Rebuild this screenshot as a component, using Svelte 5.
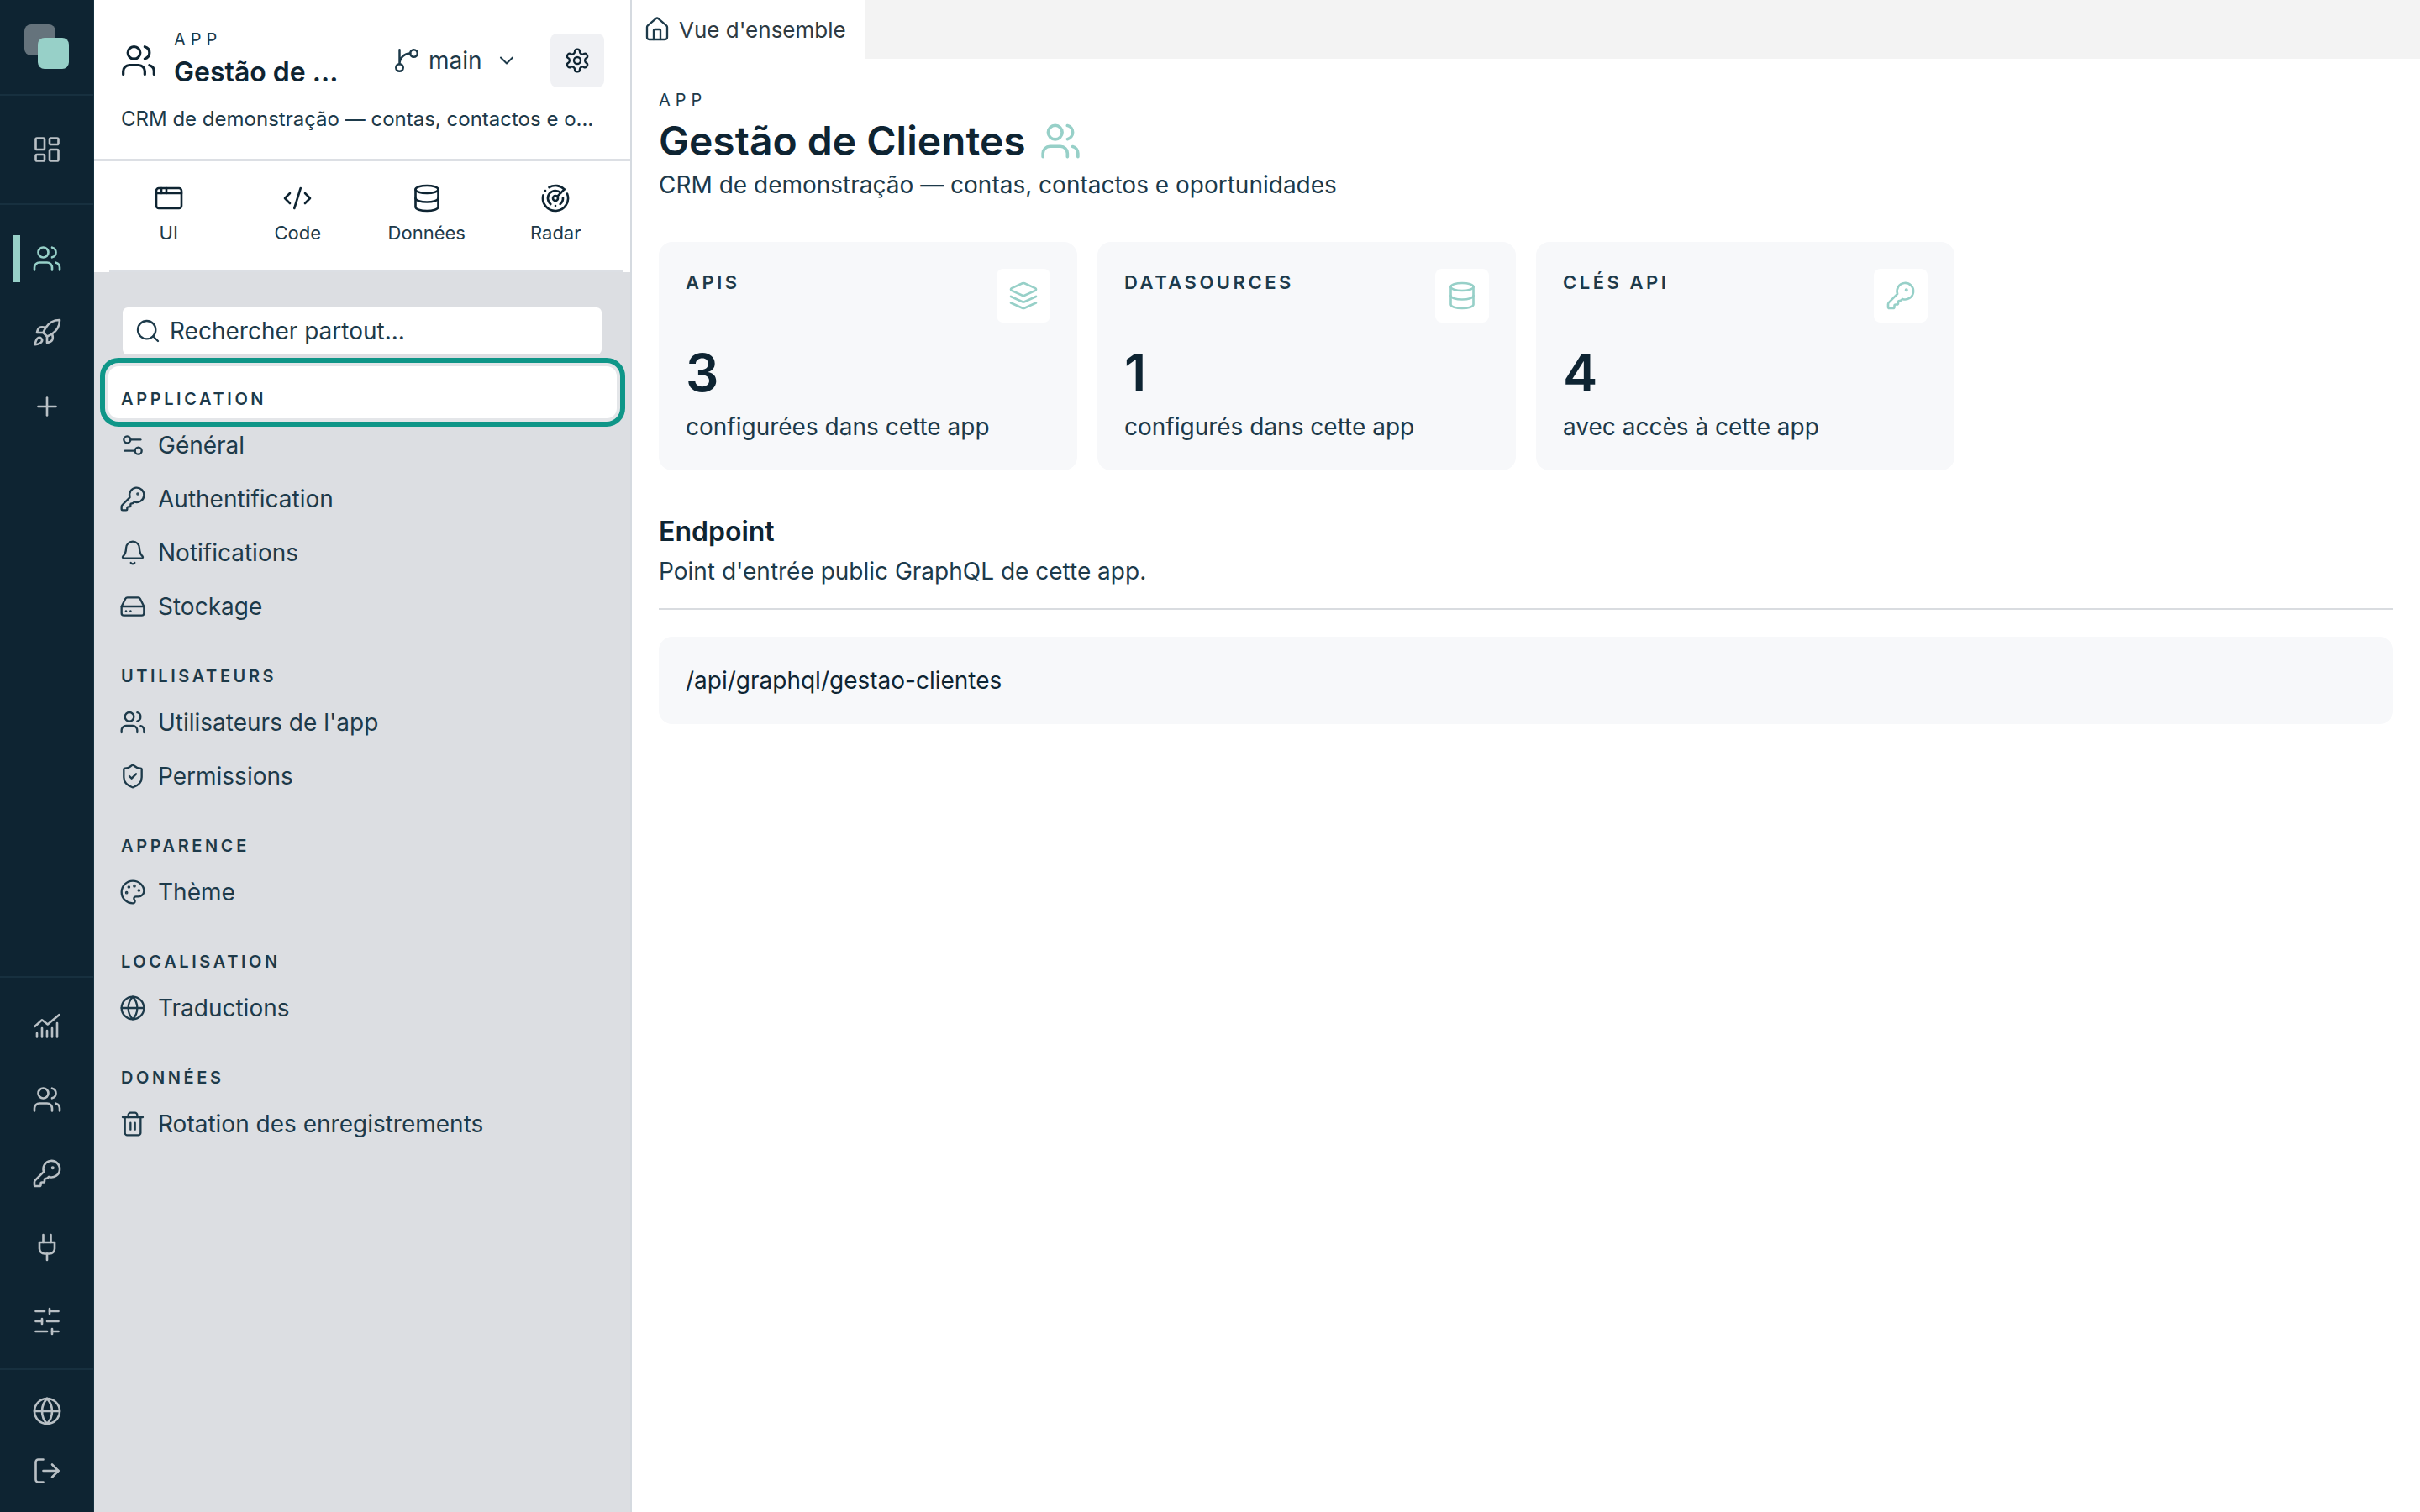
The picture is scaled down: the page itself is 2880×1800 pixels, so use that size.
<script lang="ts">
	// lucide-style icon bodies, all on a 24 unit grid
	const icons: Record<string, string> = {
		users: '<path d="M16 21v-2a4 4 0 0 0-4-4H6a4 4 0 0 0-4 4v2"/><circle cx="9" cy="7" r="4"/><path d="M22 21v-2a4 4 0 0 0-3-3.87"/><path d="M16 3.13a4 4 0 0 1 0 7.75"/>',
		dashboard: '<rect x="3" y="3" width="7" height="9" rx="1"/><rect x="14" y="3" width="7" height="5" rx="1"/><rect x="14" y="12" width="7" height="9" rx="1"/><rect x="3" y="16" width="7" height="5" rx="1"/>',
		rocket: '<path d="M4.5 16.5c-1.5 1.26-2 5-2 5s3.74-.5 5-2c.71-.84.7-2.13-.09-2.91a2.18 2.18 0 0 0-2.91-.09z"/><path d="m12 15-3-3a22 22 0 0 1 2-3.95A12.88 12.88 0 0 1 22 2c0 2.72-.78 7.5-6 11a22.35 22.35 0 0 1-4 2z"/><path d="M9 12H4s.55-3.03 2-4c1.62-1.08 5 0 5 0"/><path d="M12 15v5s3.03-.55 4-2c1.08-1.62 0-5 0-5"/>',
		plus: '<path d="M5 12h14"/><path d="M12 5v14"/>',
		chart: '<path d="M2.5 12.5 8 7.5l4.5 3.5L21.5 3.5"/><path d="M4 21v-3"/><path d="M8 21v-7"/><path d="M12 21v-5"/><path d="M16 21v-7"/><path d="M20 21V10"/>',
		key: '<path d="M2.586 17.414A2 2 0 0 0 2 18.828V21a1 1 0 0 0 1 1h3a1 1 0 0 0 1-1v-1a1 1 0 0 1 1-1h1a1 1 0 0 0 1-1v-1a1 1 0 0 1 1-1h.172a2 2 0 0 0 1.414-.586l.814-.814a6.5 6.5 0 1 0-4-4z"/><circle cx="16.5" cy="7.5" r=".5" fill="currentColor"/>',
		plug: '<path d="M12 22v-5"/><path d="M9 8V2"/><path d="M15 8V2"/><path d="M18 8v5a4 4 0 0 1-4 4h-4a4 4 0 0 1-4-4V8Z"/>',
		sliders: '<path d="M21 4h-7"/><path d="M10 4H3"/><path d="M21 12h-9"/><path d="M8 12H3"/><path d="M21 20h-5"/><path d="M12 20H3"/><path d="M14 2v4"/><path d="M8 10v4"/><path d="M16 18v4"/>',
		globe: '<circle cx="12" cy="12" r="10"/><path d="M12 2a14.5 14.5 0 0 0 0 20 14.5 14.5 0 0 0 0-20"/><path d="M2 12h20"/>',
		logout: '<path d="M9 21H5a2 2 0 0 1-2-2V5a2 2 0 0 1 2-2h4"/><path d="m16 17 5-5-5-5"/><path d="M21 12H9"/>',
		settings: '<path d="M12.22 2h-.44a2 2 0 0 0-2 2v.18a2 2 0 0 1-1 1.73l-.43.25a2 2 0 0 1-2 0l-.15-.08a2 2 0 0 0-2.73.73l-.22.38a2 2 0 0 0 .73 2.73l.15.1a2 2 0 0 1 1 1.72v.51a2 2 0 0 1-1 1.74l-.15.09a2 2 0 0 0-.73 2.73l.22.38a2 2 0 0 0 2.73.73l.15-.08a2 2 0 0 1 2 0l.43.25a2 2 0 0 1 1 1.73V20a2 2 0 0 0 2 2h.44a2 2 0 0 0 2-2v-.18a2 2 0 0 1 1-1.73l.43-.25a2 2 0 0 1 2 0l.15.08a2 2 0 0 0 2.73-.73l.22-.39a2 2 0 0 0-.73-2.73l-.15-.08a2 2 0 0 1-1-1.74v-.5a2 2 0 0 1 1-1.74l.15-.09a2 2 0 0 0 .73-2.73l-.22-.38a2 2 0 0 0-2.73-.73l-.15.08a2 2 0 0 1-2 0l-.43-.25a2 2 0 0 1-1-1.73V4a2 2 0 0 0-2-2z"/><circle cx="12" cy="12" r="3"/>',
		branch: '<path d="M15 6a9 9 0 0 0-9 9V3"/><circle cx="18" cy="6" r="3"/><circle cx="6" cy="18" r="3"/>',
		chevron: '<path d="m6 9 6 6 6-6"/>',
		window: '<rect x="2" y="4" width="20" height="16" rx="2"/><path d="M10 4v4"/><path d="M2 8h20"/><path d="M6 4v4"/>',
		code: '<path d="m18 16 4-4-4-4"/><path d="m6 8-4 4 4 4"/><path d="m14.5 4-5 16"/>',
		database: '<ellipse cx="12" cy="5" rx="9" ry="3"/><path d="M3 5V19A9 3 0 0 0 21 19V5"/><path d="M3 12A9 3 0 0 0 21 12"/>',
		radar: '<path d="M19.07 4.93A10 10 0 0 0 6.99 3.34"/><path d="M4 6h.01"/><path d="M2.29 9.62A10 10 0 1 0 21.31 8.35"/><path d="M16.24 7.76A6 6 0 1 0 8.23 16.67"/><path d="M12 18h.01"/><path d="M17.99 11.66A6 6 0 0 1 15.77 16.67"/><circle cx="12" cy="12" r="2"/><path d="m13.41 10.59 5.66-5.66"/>',
		search: '<path d="m21 21-4.34-4.34"/><circle cx="11" cy="11" r="8"/>',
		general: '<path d="M14 17H5"/><path d="M19 7h-9"/><circle cx="17" cy="17" r="3"/><circle cx="7" cy="7" r="3"/>',
		bell: '<path d="M10.268 21a2 2 0 0 0 3.464 0"/><path d="M3.262 15.326A1 1 0 0 0 4 17h16a1 1 0 0 0 .74-1.673C19.41 13.956 18 12.499 18 8A6 6 0 0 0 6 8c0 4.499-1.411 5.956-2.738 7.326"/>',
		drive: '<path d="M22 12H2"/><path d="M5.45 5.11 2 12v6a2 2 0 0 0 2 2h16a2 2 0 0 0 2-2v-6l-3.45-6.89A2 2 0 0 0 16.76 4H7.24a2 2 0 0 0-1.79 1.11z"/><path d="M6 16h.01"/><path d="M10 16h.01"/>',
		shield: '<path d="M20 13c0 5-3.5 7.5-7.66 8.95a1 1 0 0 1-.67-.01C7.5 20.5 4 18 4 13V6a1 1 0 0 1 1-1c2 0 4.5-1.2 6.24-2.72a1.17 1.17 0 0 1 1.52 0C14.51 3.81 17 5 19 5a1 1 0 0 1 1 1z"/><path d="m9 12 2 2 4-4"/>',
		palette: '<path d="M12 22a1 1 0 0 1 0-20 10 9 0 0 1 10 9 5 5 0 0 1-5 5h-2.25a1.75 1.75 0 0 0-1.4 2.8l.3.4a1.75 1.75 0 0 1-1.4 2.8z"/><circle cx="13.5" cy="6.5" r=".5" fill="currentColor"/><circle cx="17.5" cy="10.5" r=".5" fill="currentColor"/><circle cx="6.5" cy="12.5" r=".5" fill="currentColor"/><circle cx="8.5" cy="7.5" r=".5" fill="currentColor"/>',
		trash: '<path d="M3 6h18"/><path d="M19 6v14c0 1-1 2-2 2H7c-1 0-2-1-2-2V6"/><path d="M8 6V4c0-1 1-2 2-2h4c1 0 2 1 2 2v2"/><path d="M10 11v6"/><path d="M14 11v6"/>',
		house: '<path d="M15 21v-8a1 1 0 0 0-1-1h-4a1 1 0 0 0-1 1v8"/><path d="M3 10a2 2 0 0 1 .709-1.528l7-5.999a2 2 0 0 1 2.582 0l7 5.999A2 2 0 0 1 21 10v9a2 2 0 0 1-2 2H5a2 2 0 0 1-2-2z"/>',
		layers: '<path d="m12.83 2.18a2 2 0 0 0-1.66 0L2.6 6.08a1 1 0 0 0 0 1.83l8.58 3.91a2 2 0 0 0 1.66 0l8.58-3.9a1 1 0 0 0 0-1.83Z"/><path d="m22 17.65-9.17 4.16a2 2 0 0 1-1.66 0L2 17.65"/><path d="m22 12.65-9.17 4.16a2 2 0 0 1-1.66 0L2 12.65"/>'
	};

	const toolTabs = [
		{ icon: 'window', label: 'UI' },
		{ icon: 'code', label: 'Code' },
		{ icon: 'database', label: 'Données' },
		{ icon: 'radar', label: 'Radar' }
	];

	const sections = [
		{
			title: 'APPLICATION',
			items: [
				{ icon: 'general', label: 'Général' },
				{ icon: 'key', label: 'Authentification' },
				{ icon: 'bell', label: 'Notifications' },
				{ icon: 'drive', label: 'Stockage' }
			]
		},
		{
			title: 'UTILISATEURS',
			items: [
				{ icon: 'users', label: "Utilisateurs de l'app" },
				{ icon: 'shield', label: 'Permissions' }
			]
		},
		{ title: 'APPARENCE', items: [{ icon: 'palette', label: 'Thème' }] },
		{ title: 'LOCALISATION', items: [{ icon: 'globe', label: 'Traductions' }] },
		{ title: 'DONNÉES', items: [{ icon: 'trash', label: 'Rotation des enregistrements' }] }
	];

	const stats = [
		{ title: 'APIS', icon: 'layers', value: 3, note: 'configurées dans cette app' },
		{ title: 'DATASOURCES', icon: 'database', value: 1, note: 'configurés dans cette app' },
		{ title: 'CLÉS API', icon: 'key', value: 4, note: 'avec accès à cette app' }
	];
</script>

{#snippet icon(name: string, size: number, weight = 1.75)}
	<svg
		width={size}
		height={size}
		viewBox="0 0 24 24"
		fill="none"
		stroke="currentColor"
		stroke-width={weight}
		stroke-linecap="round"
		stroke-linejoin="round"
	>
		{@html icons[name]}
	</svg>
{/snippet}

<div class="app">
	<nav class="rail">
		<div class="rail-logo">
			<span class="logo-back"></span>
			<span class="logo-front"></span>
		</div>
		<div class="rail-block home">
			<span class="rail-btn">{@render icon('dashboard', 36)}</span>
		</div>
		<div class="rail-block grow">
			<span class="rail-btn active">{@render icon('users', 36)}</span>
			<span class="rail-btn">{@render icon('rocket', 36)}</span>
			<span class="rail-btn">{@render icon('plus', 36)}</span>
		</div>
		<div class="rail-block admin">
			{#each ['chart', 'users', 'key', 'plug', 'sliders'] as name}
				<span class="rail-btn">{@render icon(name, 36)}</span>
			{/each}
		</div>
		<div class="rail-block foot">
			{#each ['globe', 'logout'] as name}
				<span class="rail-btn short">{@render icon(name, 36)}</span>
			{/each}
		</div>
	</nav>

	<aside class="sidebar">
		<header class="app-head">
			<div class="head-row">
				<span class="head-icon">{@render icon('users', 44)}</span>
				<div class="head-name">
					<span class="eyebrow">APP</span>
					<strong>Gestão de ...</strong>
				</div>
				<div class="branch">
					{@render icon('branch', 34)}
					<span>main</span>
					{@render icon('chevron', 28)}
				</div>
				<button class="gear">{@render icon('settings', 32)}</button>
			</div>
			<p class="head-desc">CRM de demonstração — contas, contactos e o...</p>
		</header>

		<div class="tools">
			{#each toolTabs as tab}
				<div class="tool">
					{@render icon(tab.icon, 36)}
					<span>{tab.label}</span>
				</div>
			{/each}
		</div>

		<div class="side-body">
			<div class="search">
				{@render icon('search', 32)}
				<span>Rechercher partout...</span>
			</div>
			{#each sections as section, i}
				<h4 class="section-title" class:spot={i === 0}>{section.title}</h4>
				{#each section.items as item}
					<div class="side-item">
						{@render icon(item.icon, 32)}
						<span>{item.label}</span>
					</div>
				{/each}
			{/each}
		</div>
	</aside>

	<main class="main">
		<div class="tabbar">
			<div class="tab">
				{@render icon('house', 32)}
				<span>Vue d'ensemble</span>
			</div>
		</div>
		<div class="content">
			<span class="eyebrow">APP</span>
			<h1>Gestão de Clientes <span class="title-icon">{@render icon('users', 50)}</span></h1>
			<p class="lead">CRM de demonstração — contas, contactos e oportunidades</p>

			<div class="cards">
				{#each stats as stat}
					<div class="card">
						<div class="card-top">
							<span class="card-title">{stat.title}</span>
							<span class="card-icon">{@render icon(stat.icon, 36)}</span>
						</div>
						<div class="card-value">{stat.value}</div>
						<div class="card-note">{stat.note}</div>
					</div>
				{/each}
			</div>

			<h2>Endpoint</h2>
			<p class="sub">Point d'entrée public GraphQL de cette app.</p>
			<div class="endpoint">/api/graphql/gestao-clientes</div>
		</div>
	</main>
</div>

<style>
	:global(body) {
		margin: 0;
		font-family: Inter, 'Liberation Sans', sans-serif;
		color: #0e2432;
		background: #fff;
	}

	.app {
		display: flex;
		width: 2880px;
		height: 1800px;
		overflow: hidden;
	}

	svg {
		display: block;
		flex: none;
	}

	/* left rail */
	.rail {
		width: 112px;
		flex: none;
		display: flex;
		flex-direction: column;
		background: #0e2432;
		color: #b9c0c5;
		box-sizing: border-box;
		border-right: 1px solid #14303f;
	}

	.rail-logo {
		position: relative;
		height: 112px;
		flex: none;
		border-bottom: 2px solid #17303f;
	}

	.logo-back,
	.logo-front {
		position: absolute;
		width: 37px;
		height: 37px;
		border-radius: 8px;
	}

	.logo-back {
		left: 29px;
		top: 29px;
		background: #65737c;
	}

	.logo-front {
		left: 45px;
		top: 45px;
		background: #97d0c8;
	}

	.rail-block {
		display: flex;
		flex-direction: column;
		flex: none;
	}

	.home {
		height: 128px;
		justify-content: center;
		border-bottom: 2px solid #17303f;
	}

	.grow {
		flex: 1;
		padding-top: 20px;
		border-bottom: 2px solid #17303f;
	}

	.admin {
		padding: 13px 0 12px;
		border-bottom: 2px solid #17303f;
	}

	.foot {
		padding: 13px 0 14px;
	}

	.rail-btn {
		position: relative;
		height: 88px;
		display: flex;
		align-items: center;
		justify-content: center;
	}

	.rail-btn.short {
		height: 71px;
	}

	.rail-btn.active {
		color: #97d0c8;
	}

	.rail-btn.active::before {
		content: '';
		position: absolute;
		left: 16px;
		top: 16px;
		width: 8px;
		height: 56px;
		background: #97d0c8;
	}

	/* sidebar */
	.sidebar {
		width: 640px;
		flex: none;
		display: flex;
		flex-direction: column;
		background: #dcdee2;
		border-right: 2px solid #d5dae0;
		box-sizing: border-box;
	}

	.app-head {
		height: 192px;
		flex: none;
		box-sizing: border-box;
		background: #fff;
		border-bottom: 3px solid #dcdfe4;
		padding: 40px 30px 0 32px;
	}

	.head-row {
		display: flex;
		align-items: center;
		height: 64px;
	}

	.head-icon {
		color: #0e2432;
		margin: 0 20px 0 -1px;
	}

	.head-name {
		display: flex;
		flex-direction: column;
		width: 260px;
		gap: 7px;
		margin-top: -3px;
	}

	.head-name strong {
		font-size: 32px;
		line-height: 40px;
		font-weight: 600;
	}

	.eyebrow {
		font-size: 20px;
		line-height: 24px;
		letter-spacing: 0.3em;
		color: #1d3a4a;
	}

	.branch {
		display: flex;
		align-items: center;
		gap: 9px;
		width: 188px;
		font-size: 28px;
		color: #1d3a4a;
	}

	.branch span {
		width: 70px;
	}

	.gear {
		width: 64px;
		height: 64px;
		border: 0;
		padding: 0;
		border-radius: 8px;
		background: #f0f1f4;
		color: #0e2432;
		display: flex;
		align-items: center;
		justify-content: center;
	}

	.head-desc {
		margin: 20px 0 0;
		font-size: 24px;
		line-height: 36px;
		color: #1d3a4a;
		white-space: nowrap;
	}

	.tools {
		height: 132px;
		flex: none;
		display: grid;
		grid-template-columns: repeat(4, 153.5px);
		padding: 0 12px;
		background: #fff;
		position: relative;
	}

	.tools::after {
		content: '';
		position: absolute;
		left: 18px;
		right: 8px;
		bottom: 0;
		height: 2px;
		background: #dcdfe4;
	}

	.tool {
		display: flex;
		flex-direction: column;
		align-items: center;
		padding-top: 26px;
		gap: 7px;
		font-size: 22px;
		line-height: 32px;
		color: #1d3a4a;
	}

	.tool svg {
		color: #0e2432;
	}

	.side-body {
		flex: 1;
		padding: 42px 32px 0;
	}

	.search {
		display: flex;
		align-items: center;
		gap: 10px;
		height: 56px;
		margin: 0 2px;
		padding: 0 14px;
		background: #fff;
		border-radius: 6px;
		font-size: 28px;
		color: #1d3a4a;
	}

	.section-title {
		position: relative;
		z-index: 0;
		margin: 28px 0 0;
		height: 46px;
		line-height: 46px;
		font-size: 20px;
		font-weight: 600;
		letter-spacing: 0.18em;
		color: #1d3a4a;
	}

	.section-title.spot {
		margin-top: 30px;
	}

	.section-title.spot::before {
		content: '';
		position: absolute;
		z-index: -1;
		left: -15px;
		right: -16px;
		top: -16px;
		bottom: 0;
		background: #fff;
		border-radius: 12px;
		outline: 6px solid #0f9688;
		outline-offset: 4px;
		box-shadow: 0 0 0 4px #e4e6e9;
	}

	.side-item {
		display: flex;
		align-items: center;
		gap: 14px;
		height: 64px;
		font-size: 28px;
		color: #1d3a4a;
	}

	.side-item svg {
		margin-left: -2px;
	}

	/* main */
	.main {
		flex: 1;
		min-width: 0;
		display: flex;
		flex-direction: column;
		background: #fff;
	}

	.tabbar {
		height: 70px;
		flex: none;
		background: #f3f3f3;
		display: flex;
	}

	.tab {
		width: 278px;
		box-sizing: border-box;
		display: flex;
		align-items: center;
		gap: 10px;
		padding-left: 14px;
		background: #fff;
		font-size: 26px;
		color: #2e3a42;
	}

	.tab svg {
		color: #1d3a4a;
	}

	.content {
		padding: 36px 32px 0;
	}

	.content .eyebrow {
		display: block;
		line-height: 26px;
	}

	h1 {
		margin: 6px 0 0;
		display: flex;
		align-items: center;
		gap: 16px;
		font-size: 48px;
		line-height: 60px;
		font-weight: 600;
		color: #0e2432;
	}

	.title-icon {
		color: #97d0c8;
	}

	.lead {
		margin: 2px 0 0;
		font-size: 28px;
		line-height: 40px;
		color: #1d3a4a;
	}

	.cards {
		display: flex;
		gap: 24px;
		margin-top: 48px;
	}

	.card {
		width: 498px;
		height: 272px;
		box-sizing: border-box;
		padding: 32px;
		background: #f7f8fa;
		border-radius: 16px;
	}

	.card-top {
		display: flex;
		justify-content: space-between;
		align-items: flex-start;
		height: 64px;
	}

	.card-title {
		font-size: 22px;
		line-height: 32px;
		font-weight: 600;
		letter-spacing: 0.16em;
		color: #1d3a4a;
	}

	.card-icon {
		width: 64px;
		height: 64px;
		border-radius: 8px;
		background: #fff;
		color: #97d0c8;
		display: flex;
		align-items: center;
		justify-content: center;
	}

	.card-value {
		margin-top: 24px;
		font-size: 62px;
		line-height: 72px;
		font-weight: 600;
		color: #0e2432;
	}

	.card-note {
		margin-top: 8px;
		font-size: 28px;
		line-height: 40px;
		color: #1d3a4a;
	}

	h2 {
		margin: 52px 0 0;
		font-size: 32px;
		line-height: 42px;
		font-weight: 600;
		color: #0e2432;
	}

	.sub {
		margin: 6px 0 0;
		padding-bottom: 24px;
		border-bottom: 2px solid #d9dce0;
		font-size: 28px;
		line-height: 40px;
		color: #1d3a4a;
	}

	.endpoint {
		margin-top: 32px;
		height: 104px;
		box-sizing: border-box;
		padding: 0 32px;
		display: flex;
		align-items: center;
		background: #f7f8fa;
		border-radius: 16px;
		font-size: 28px;
		color: #0e2432;
	}
</style>
